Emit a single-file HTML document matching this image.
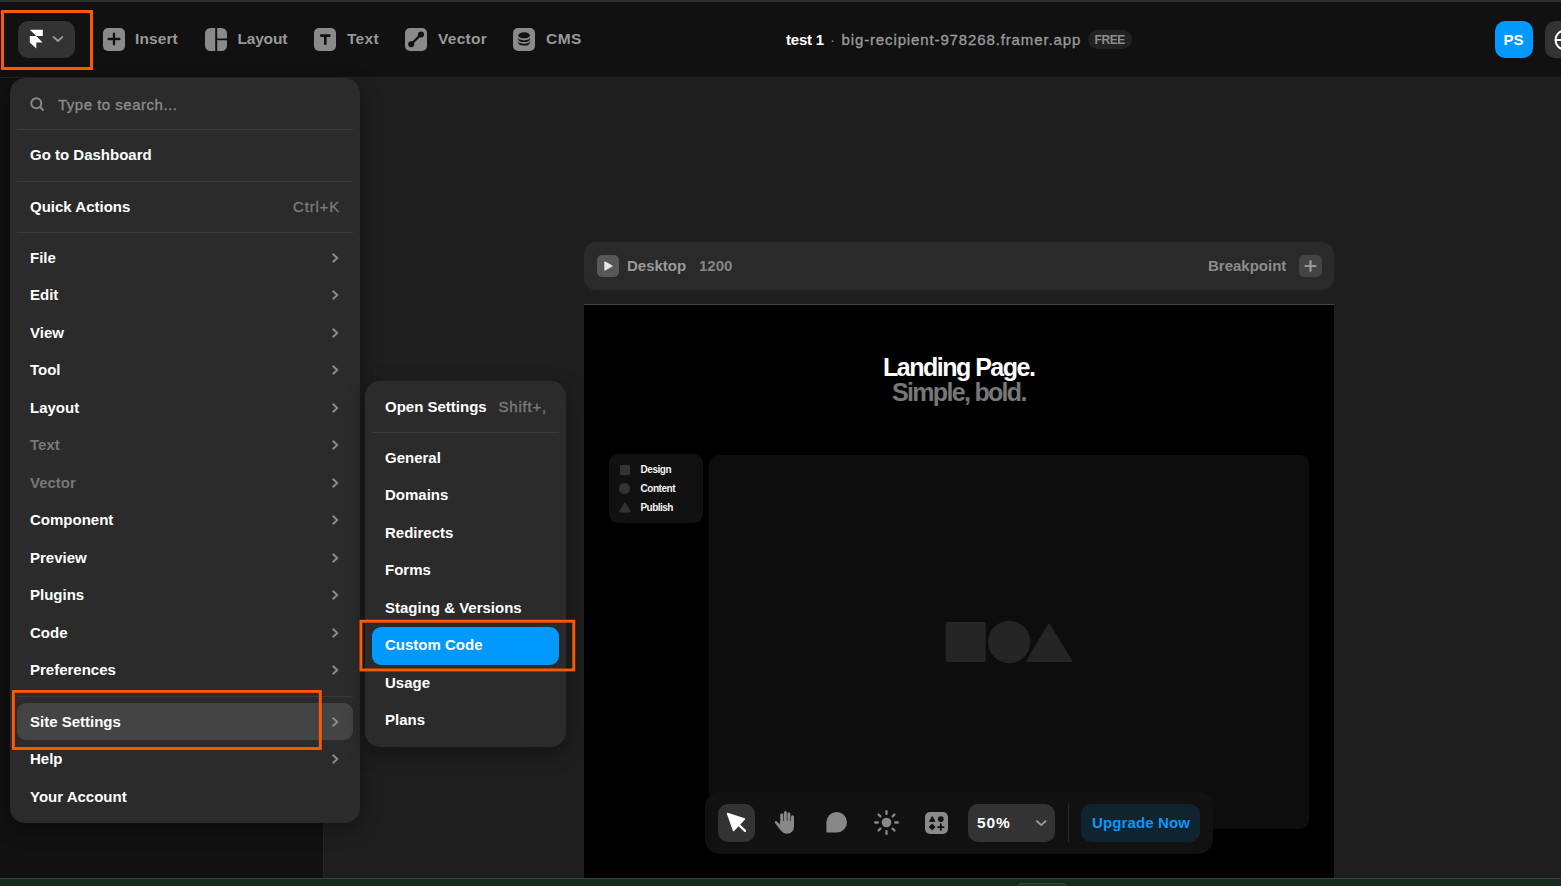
<!DOCTYPE html>
<html lang="en">
<head>
<meta charset="utf-8">
<title>Framer – Site Settings – Custom Code</title>
<style>
*{box-sizing:border-box;margin:0;padding:0}
html,body{width:1561px;height:886px;overflow:hidden;background:#1e1e1e;}
body{position:relative;font-family:"Liberation Sans",sans-serif;font-weight:700;font-size:15px;color:#fff;-webkit-font-smoothing:antialiased}
.abs{position:absolute}
.t{position:absolute;white-space:nowrap;line-height:20px;height:20px}
/* chrome strips */
#topstrip{left:0;top:0;width:1561px;height:2px;background:#2e2e33}
#toolbar{left:0;top:2px;width:1561px;height:75px;background:#111}
#tbline{left:0;top:77px;width:1561px;height:1px;background:#232323}
#leftpanel{left:0;top:78px;width:323px;height:800px;background:#111}
#lpline{left:323px;top:78px;width:1px;height:800px;background:#262626}
#bottomstrip{left:0;top:878px;width:1561px;height:8px;background:#152b1b;border-top:1px solid #2e4735}
#bottab{left:1018px;top:883px;width:48px;height:6px;border-radius:3px 3px 0 0;background:#203a27;border:1px solid #2f4c37}
/* toolbar */
.tb{color:#999;font-size:15.5px;margin-top:-.4px}
.ico{position:absolute;width:22px;height:22.6px;border-radius:5px;background:#8a8a8a}
#fbtn{left:18px;top:21px;width:57px;height:37px;border-radius:10px;background:#333}
.hl{position:absolute;border:3px solid #ff5f00;}
#avatar{left:1495px;top:21px;width:38px;height:37px;border-radius:10px;background:#09f}
#globe{left:1545px;top:21px;width:38px;height:37px;border-radius:10px;background:#333}
#free{left:1088px;top:30px;width:44px;height:19px;border-radius:10px;background:#222}
/* menus */
.menu{position:absolute;background:#2b2b2b;border-radius:15px;box-shadow:0 6px 20px rgba(0,0,0,.35)}
.dv{position:absolute;height:1px;background:#3a3a3a}
.dim{color:#777}
.sc{color:#7a7a7a;font-weight:400;letter-spacing:.8px;-webkit-text-stroke:.35px #7a7a7a}
.ph{color:#8a8a8a;font-weight:400;letter-spacing:.5px;-webkit-text-stroke:.35px #8a8a8a}
.chev{position:absolute;width:8px;height:12px}
#sitehl{left:17px;top:703px;width:336px;height:37px;border-radius:9px;background:#444}
#codehl{left:372px;top:627px;width:187px;height:38px;border-radius:9px;background:#09f}
/* canvas */
#bpbar{left:584px;top:242px;width:750px;height:48px;border-radius:12px;background:#2a2a2a}
#frame{left:584px;top:304px;width:750px;height:574px;background:#000;border-top:1px solid #444}
#card{left:609px;top:454.3px;width:94px;height:69.2px;border-radius:9px;background:#111}
#panel{left:709px;top:455px;width:600px;height:374px;border-radius:9px;background:#0d0d0d}
#btool{left:705px;top:792px;width:508px;height:62px;border-radius:15px;background:#111}
</style>
</head>
<body>
<div id="topstrip" class="abs"></div>
<div id="toolbar" class="abs"></div>
<div id="tbline" class="abs"></div>
<div id="leftpanel" class="abs"></div>
<div id="lpline" class="abs"></div>

<!-- CANVAS -->
<div id="bpbar" class="abs"></div>
<div id="frame" class="abs"></div>
<div id="card" class="abs"></div>
<div id="panel" class="abs"></div>
<div id="btool" class="abs"></div>

<!-- breakpoint bar -->
<div class="abs" style="left:597px;top:255px;width:22px;height:22px;border-radius:5px;background:#575757"></div>
<svg class="abs" style="left:597px;top:255px;width:22px;height:22px" viewBox="0 0 22 22"><path d="M8 7.2 L15 11 L8 14.8 Z" fill="#e6e6e6" stroke="#e6e6e6" stroke-width="1.4" stroke-linejoin="round"/></svg>
<div class="t" style="left:627px;top:256px;color:#999">Desktop</div>
<div class="t" style="left:699px;top:256px;color:#858585">1200</div>
<div class="t" style="left:1208px;top:256px;color:#8c8c8c">Breakpoint</div>
<div class="abs" style="left:1299px;top:255px;width:23px;height:22px;border-radius:5px;background:#444"></div>
<svg class="abs" style="left:1299px;top:255px;width:23px;height:22px" viewBox="0 0 23 22"><path d="M11.5 6.2 V15.8 M6.5 11 H16.5" fill="none" stroke="#9a9a9a" stroke-width="2.2" stroke-linecap="round"/></svg>
<!-- frame content -->
<div class="t" style="left:883px;top:352px;font-size:25px;line-height:30px;height:30px;letter-spacing:-1.5px">Landing Page.</div>
<div class="t" style="left:892px;top:377px;font-size:25px;line-height:30px;height:30px;letter-spacing:-1.68px;color:#777">Simple, bold.</div>
<!-- card -->
<div class="abs" style="left:620px;top:465px;width:10px;height:10px;border-radius:1px;background:#333"></div>
<div class="abs" style="left:619px;top:483px;width:11.4px;height:11.4px;border-radius:50%;background:#333"></div>
<svg class="abs" style="left:618px;top:501px;width:14px;height:13px" viewBox="0 0 14 13"><path d="M6.9 1.7 L12.4 11 H1.4 Z" fill="#333" stroke="#333" stroke-width="1" stroke-linejoin="round"/></svg>
<div class="t" style="left:640.5px;top:463px;font-size:10px;line-height:14px;height:14px;color:#f2f2f2;letter-spacing:-.45px">Design</div>
<div class="t" style="left:640.5px;top:482px;font-size:10px;line-height:14px;height:14px;color:#f2f2f2;letter-spacing:-.45px">Content</div>
<div class="t" style="left:640.5px;top:501px;font-size:10px;line-height:14px;height:14px;color:#f2f2f2;letter-spacing:-.55px">Publish</div>
<!-- placeholder shapes -->
<svg class="abs" style="left:940px;top:615px;width:140px;height:54px" viewBox="0 0 140 54"><rect x="5.7" y="7" width="40" height="40" rx="2" fill="#252525"/><circle cx="69.2" cy="27" r="21.2" fill="#252525"/><path d="M109 9.6 L131.2 46 H87.2 Z" fill="#252525" stroke="#252525" stroke-width="2" stroke-linejoin="round"/></svg>

<!-- TOOLBAR -->
<div id="fbtn" class="abs"></div>
<div id="avatar" class="abs"></div>
<div id="globe" class="abs"></div>
<div id="free" class="abs"></div>
<!-- framer button content -->
<svg class="abs" style="left:29px;top:29px;width:15px;height:21px" viewBox="0 0 15 21"><path d="M0.8 0.8 H13.8 V7.1 H7.3 Z M0.8 7.1 H7.3 L13.5 13.4 H7.3 V19.6 L0.8 13.4 Z" fill="#fff"/></svg>
<svg class="abs" style="left:52px;top:34px;width:12px;height:10px" viewBox="0 0 12 10"><path d="M1.6 3 L6 7 L10.4 3" fill="none" stroke="#999" stroke-width="1.8" stroke-linecap="round" stroke-linejoin="round"/></svg>
<!-- Insert -->
<div class="ico" style="left:103px;top:28px"></div>
<svg class="abs" style="left:103px;top:28px;width:22px;height:22px" viewBox="0 0 22 22"><path d="M11 5.6 V16.4 M5.6 11 H16.4" fill="none" stroke="#111" stroke-width="2.3" stroke-linecap="round"/></svg>
<div class="t tb" style="left:135px;top:29px;letter-spacing:.1px">Insert</div>
<!-- Layout -->
<svg class="abs" style="left:205px;top:28px;width:22px;height:23px" viewBox="0 0 22 23"><path d="M5.5 0 H10.2 V23 H5.5 A5.5 5.5 0 0 1 0 17.5 V5.5 A5.5 5.5 0 0 1 5.5 0 Z M12.2 0 H16.5 A5.5 5.5 0 0 1 22 5.5 V10.4 H12.2 Z M12.2 12.2 H22 V17.5 A5.5 5.5 0 0 1 16.5 23 H12.2 Z" fill="#8a8a8a"/></svg>
<div class="t tb" style="left:237.5px;top:29px;letter-spacing:-.2px">Layout</div>
<!-- Text -->
<div class="ico" style="left:314px;top:28px"></div>
<svg class="abs" style="left:314px;top:28px;width:22px;height:22px" viewBox="0 0 22 22"><path d="M7.2 7.6 H15.4 M11.3 7.6 V15.8" fill="none" stroke="#111" stroke-width="2.6" stroke-linecap="round"/></svg>
<div class="t tb" style="left:347px;top:29px;letter-spacing:.3px">Text</div>
<!-- Vector -->
<div class="ico" style="left:405px;top:28px"></div>
<svg class="abs" style="left:405px;top:28px;width:22px;height:22px" viewBox="0 0 22 22"><path d="M6.2 16.2 L16 6.4" stroke="#111" stroke-width="2.2"/><circle cx="6.2" cy="16.2" r="3" fill="#111"/><circle cx="16" cy="6.4" r="3" fill="#111"/></svg>
<div class="t tb" style="left:438px;top:29px;letter-spacing:.3px">Vector</div>
<!-- CMS -->
<div class="ico" style="left:513px;top:28px"></div>
<svg class="abs" style="left:513px;top:28px;width:22px;height:22px" viewBox="0 0 22 22"><ellipse cx="11.1" cy="7.3" rx="5.8" ry="3" fill="#111"/><path d="M5.3 9.6 C5.3 11.3 7.9 12.4 11.1 12.4 S16.9 11.3 16.9 9.6 V11.2 C16.9 12.9 14.3 14.1 11.1 14.1 S5.3 12.9 5.3 11.2 Z" fill="#111"/><path d="M5.3 13 C5.3 14.7 7.9 15.8 11.1 15.8 S16.9 14.7 16.9 13 V14.8 C16.9 16.5 14.3 17.7 11.1 17.7 S5.3 16.5 5.3 14.8 Z" fill="#111"/></svg>
<div class="t tb" style="left:546px;top:29px;letter-spacing:.5px">CMS</div>
<!-- title -->
<div class="t" style="left:786px;top:30px;letter-spacing:-.2px">test 1</div>
<div class="t" style="left:830px;top:30px;color:#888;font-weight:400">·</div>
<div class="t" style="left:841.5px;top:30px;color:#999;font-weight:400;letter-spacing:.87px;-webkit-text-stroke:.35px #999">big-recipient-978268.framer.app</div>
<div class="t" style="left:1094.5px;top:30px;font-size:12px;color:#8c8c8c;letter-spacing:-.4px">FREE</div>
<!-- avatar -->
<div class="t" style="left:1503.5px;top:30px;font-size:15px">PS</div>
<svg class="abs" style="left:1553px;top:28px;width:8px;height:24px" viewBox="0 0 8 24"><circle cx="12" cy="12" r="9.5" fill="none" stroke="#fff" stroke-width="2"/><path d="M2.5 12 H8" stroke="#fff" stroke-width="2"/></svg>

<!-- bottom toolbar -->
<div class="abs" style="left:718px;top:804px;width:37px;height:38px;border-radius:10px;background:#333"></div>
<svg class="abs" style="left:718px;top:804px;width:37px;height:38px" viewBox="0 0 37 38"><path d="M9.6 9.6 L26.4 15 L15.6 26.4 Z" fill="#fff" stroke="#fff" stroke-width="1.6" stroke-linejoin="round"/><path d="M20.5 20.5 L27 26.8" stroke="#fff" stroke-width="2.4" stroke-linecap="round"/></svg>
<!-- hand -->
<svg class="abs" style="left:772px;top:809px;width:26px;height:28px" viewBox="0 0 26 28"><g fill="#888"><rect x="8.2" y="4.3" width="3" height="12" rx="1.5"/><rect x="11.8" y="2" width="3" height="13" rx="1.5"/><rect x="15.4" y="3.3" width="3" height="13" rx="1.5"/><rect x="19" y="6.2" width="3" height="12" rx="1.5"/><path d="M8.2 12 H22 V17.5 C22 22 19 24.7 15.2 24.7 C12.2 24.7 10.3 23.4 8.4 21 L3 14 C2.2 12.9 3.6 11.5 4.8 12.4 L8.2 15.4 Z"/></g></svg>
<!-- comment -->
<svg class="abs" style="left:824px;top:810px;width:26px;height:26px" viewBox="0 0 26 26"><path d="M12.7 2 A10.3 10.3 0 0 1 12.7 22.6 H3.6 A1.2 1.2 0 0 1 2.4 21.4 V12.3 A10.3 10.3 0 0 1 12.7 2 Z" fill="#888"/></svg>
<!-- sun -->
<svg class="abs" style="left:872px;top:808px;width:29px;height:29px" viewBox="-14.5 -14.5 29 29"><circle r="4.8" fill="#888"/><g stroke="#888" stroke-width="2.3" stroke-linecap="round"><path d="M0 -8.6 V-11.4 M0 8.6 V11.4 M-8.6 0 H-11.4 M8.6 0 H11.4 M6.1 -6.1 L8 -8 M-6.1 -6.1 L-8 -8 M6.1 6.1 L8 8 M-6.1 6.1 L-8 8"/></g></svg>
<!-- grid -->
<div class="abs" style="left:925px;top:812px;width:23px;height:22px;border-radius:5px;background:#8a8a8a"></div>
<svg class="abs" style="left:925px;top:812px;width:23px;height:22px" viewBox="0 0 23 22"><path d="M7.2 4.4 L10 9.4 H4.4 Z" fill="#111" stroke="#111" stroke-width=".8" stroke-linejoin="round"/><circle cx="15.8" cy="7.1" r="2.9" fill="#111"/><path d="M7.2 12 L10.2 15 L7.2 18 L4.2 15 Z" fill="#111" stroke="#111" stroke-width=".8" stroke-linejoin="round"/><path d="M15.8 12.3 V17.9 M13 15.1 H18.6" stroke="#111" stroke-width="1.9" stroke-linecap="round"/></svg>
<!-- zoom -->
<div class="abs" style="left:968px;top:804px;width:87px;height:38px;border-radius:10px;background:#333"></div>
<div class="t" style="left:977px;top:812.5px;letter-spacing:.9px;font-size:15.5px">50%</div>
<svg class="abs" style="left:1035px;top:818px;width:12px;height:10px" viewBox="0 0 12 10"><path d="M1.8 3 L6.2 7.2 L10.6 3" fill="none" stroke="#999" stroke-width="1.8" stroke-linecap="round" stroke-linejoin="round"/></svg>
<div class="abs" style="left:1068px;top:804px;width:1px;height:38px;background:#2a2a2a"></div>
<div class="abs" style="left:1081px;top:804px;width:119px;height:38px;border-radius:10px;background:#10242f"></div>
<div class="t" style="left:1092px;top:813px;color:#0a96fa;letter-spacing:.12px">Upgrade Now</div>


<!-- MENUS -->
<div id="menu1" class="menu" style="left:10px;top:78px;width:350px;height:745px"></div>
<svg class="abs" style="left:29px;top:96px;width:16px;height:16px" viewBox="0 0 16 16"><circle cx="7.3" cy="7.3" r="5" fill="none" stroke="#8a8a8a" stroke-width="1.9"/><path d="M11 11 L14 14" stroke="#8a8a8a" stroke-width="1.9" stroke-linecap="round"/></svg>
<div class="t ph" style="left:58px;top:95px;">Type to search...</div>
<div class="dv" style="left:17px;top:129px;width:336px"></div>
<div class="t" style="left:30px;top:145px;">Go to Dashboard</div>
<div class="dv" style="left:17px;top:181px;width:336px"></div>
<div class="t" style="left:30px;top:197px;">Quick Actions</div>
<div class="t sc" style="right:1221px;top:197px;">Ctrl+K</div>
<div class="dv" style="left:17px;top:232px;width:336px"></div>
<div class="t" style="left:30px;top:248.0px;">File</div>
<svg class="chev" style="left:331px;top:252.0px" viewBox="0 0 8 12"><path d="M1.7 1.8 L6.3 6 L1.7 10.2" fill="none" stroke="#8a8a8a" stroke-width="2" stroke-linecap="butt" stroke-linejoin="round"/></svg>
<div class="t" style="left:30px;top:285.4px;">Edit</div>
<svg class="chev" style="left:331px;top:289.4px" viewBox="0 0 8 12"><path d="M1.7 1.8 L6.3 6 L1.7 10.2" fill="none" stroke="#8a8a8a" stroke-width="2" stroke-linecap="butt" stroke-linejoin="round"/></svg>
<div class="t" style="left:30px;top:322.9px;">View</div>
<svg class="chev" style="left:331px;top:326.9px" viewBox="0 0 8 12"><path d="M1.7 1.8 L6.3 6 L1.7 10.2" fill="none" stroke="#8a8a8a" stroke-width="2" stroke-linecap="butt" stroke-linejoin="round"/></svg>
<div class="t" style="left:30px;top:360.3px;">Tool</div>
<svg class="chev" style="left:331px;top:364.3px" viewBox="0 0 8 12"><path d="M1.7 1.8 L6.3 6 L1.7 10.2" fill="none" stroke="#8a8a8a" stroke-width="2" stroke-linecap="butt" stroke-linejoin="round"/></svg>
<div class="t" style="left:30px;top:397.8px;">Layout</div>
<svg class="chev" style="left:331px;top:401.8px" viewBox="0 0 8 12"><path d="M1.7 1.8 L6.3 6 L1.7 10.2" fill="none" stroke="#8a8a8a" stroke-width="2" stroke-linecap="butt" stroke-linejoin="round"/></svg>
<div class="t dim" style="left:30px;top:435.2px;">Text</div>
<svg class="chev" style="left:331px;top:439.2px" viewBox="0 0 8 12"><path d="M1.7 1.8 L6.3 6 L1.7 10.2" fill="none" stroke="#8a8a8a" stroke-width="2" stroke-linecap="butt" stroke-linejoin="round"/></svg>
<div class="t dim" style="left:30px;top:472.7px;">Vector</div>
<svg class="chev" style="left:331px;top:476.7px" viewBox="0 0 8 12"><path d="M1.7 1.8 L6.3 6 L1.7 10.2" fill="none" stroke="#8a8a8a" stroke-width="2" stroke-linecap="butt" stroke-linejoin="round"/></svg>
<div class="t" style="left:30px;top:510.1px;">Component</div>
<svg class="chev" style="left:331px;top:514.1px" viewBox="0 0 8 12"><path d="M1.7 1.8 L6.3 6 L1.7 10.2" fill="none" stroke="#8a8a8a" stroke-width="2" stroke-linecap="butt" stroke-linejoin="round"/></svg>
<div class="t" style="left:30px;top:547.6px;">Preview</div>
<svg class="chev" style="left:331px;top:551.6px" viewBox="0 0 8 12"><path d="M1.7 1.8 L6.3 6 L1.7 10.2" fill="none" stroke="#8a8a8a" stroke-width="2" stroke-linecap="butt" stroke-linejoin="round"/></svg>
<div class="t" style="left:30px;top:585.1px;">Plugins</div>
<svg class="chev" style="left:331px;top:589.1px" viewBox="0 0 8 12"><path d="M1.7 1.8 L6.3 6 L1.7 10.2" fill="none" stroke="#8a8a8a" stroke-width="2" stroke-linecap="butt" stroke-linejoin="round"/></svg>
<div class="t" style="left:30px;top:622.5px;">Code</div>
<svg class="chev" style="left:331px;top:626.5px" viewBox="0 0 8 12"><path d="M1.7 1.8 L6.3 6 L1.7 10.2" fill="none" stroke="#8a8a8a" stroke-width="2" stroke-linecap="butt" stroke-linejoin="round"/></svg>
<div class="t" style="left:30px;top:660.0px;">Preferences</div>
<svg class="chev" style="left:331px;top:664.0px" viewBox="0 0 8 12"><path d="M1.7 1.8 L6.3 6 L1.7 10.2" fill="none" stroke="#8a8a8a" stroke-width="2" stroke-linecap="butt" stroke-linejoin="round"/></svg>
<div class="dv" style="left:17px;top:696px;width:336px"></div>
<div id="sitehl" class="abs"></div>
<div class="t" style="left:30px;top:712px;">Site Settings</div>
<svg class="chev" style="left:331px;top:716px" viewBox="0 0 8 12"><path d="M1.7 1.8 L6.3 6 L1.7 10.2" fill="none" stroke="#8a8a8a" stroke-width="2" stroke-linecap="butt" stroke-linejoin="round"/></svg>
<div class="t" style="left:30px;top:749px;">Help</div>
<svg class="chev" style="left:331px;top:753px" viewBox="0 0 8 12"><path d="M1.7 1.8 L6.3 6 L1.7 10.2" fill="none" stroke="#8a8a8a" stroke-width="2" stroke-linecap="butt" stroke-linejoin="round"/></svg>
<div class="t" style="left:30px;top:787px;">Your Account</div>
<div id="menu2" class="menu" style="left:365px;top:381px;width:201px;height:366px"></div>
<div class="t" style="left:385px;top:397px;">Open Settings</div>
<div class="t sc" style="right:1014px;top:397px;">Shift+,</div>
<div class="dv" style="left:372px;top:432px;width:187px"></div>
<div class="t" style="left:385px;top:447.7px;">General</div>
<div class="t" style="left:385px;top:485.2px;">Domains</div>
<div class="t" style="left:385px;top:522.7px;">Redirects</div>
<div class="t" style="left:385px;top:560.2px;">Forms</div>
<div class="t" style="left:385px;top:597.7px;">Staging &amp; Versions</div>
<div id="codehl" class="abs"></div>
<div class="t" style="left:385px;top:635.2px;">Custom Code</div>
<div class="t" style="left:385px;top:672.7px;">Usage</div>
<div class="t" style="left:385px;top:710.2px;">Plans</div>
<svg class="abs" style="left:0;top:0;width:1561px;height:886px;pointer-events:none" viewBox="0 0 1561 886" fill="none" stroke="#ff5900">
<rect x="2.5" y="11.5" width="89" height="57" stroke-width="3"/>
<rect x="13.4" y="691.4" width="306.9" height="57.1" stroke-width="2.9"/>
<rect x="360.95" y="621.2" width="212.8" height="48.75" stroke-width="2.9"/>
</svg>


<div id="bottomstrip" class="abs"></div>
<div id="bottab" class="abs"></div>
</body>
</html>
